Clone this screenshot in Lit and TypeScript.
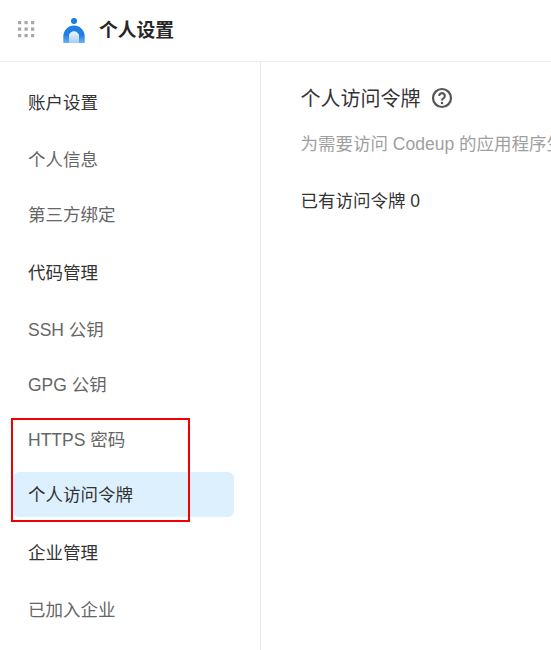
import { LitElement, html, css, svg } from "lit";
import { customElement } from "lit/decorators.js";

const FONT = css`"Liberation Sans", "Noto Sans CJK SC", sans-serif`;

type Item = { label: string; head?: boolean; active?: boolean };
const ITEMS: Item[] = [
  { label: "账户设置", head: true },
  { label: "个人信息" },
  { label: "第三方绑定" },
  { label: "代码管理", head: true },
  { label: "SSH 公钥" },
  { label: "GPG 公钥" },
  { label: "HTTPS 密码" },
  { label: "个人访问令牌", active: true },
  { label: "企业管理", head: true },
  { label: "已加入企业" },
];

@customElement("app-root")
export class AppRoot extends LitElement {
  static styles = css`
    :host {
      display: block;
      position: relative;
      width: 551px;
      height: 650px;
      overflow: hidden;
      background: #fff;
      font-family: ${FONT};
    }
    .top {
      height: 62px;
      box-sizing: border-box;
      border-bottom: 1px solid #ececec;
      display: flex;
      align-items: center;
      padding: 0 0 5px 17px;
    }
    .grid { display: block; width: 18px; height: 18px; margin-top: 2px; }
    .logo { display: block; width: 22px; height: 25px; margin: 4px 0 0 28px; }
    .title {
      margin-left: 14px;
      font-size: 18.75px;
      font-weight: 700;
      color: #262626;
    }
    .body { display: flex; height: 588px; }
    .side {
      width: 261px;
      box-sizing: border-box;
      border-right: 1px solid #e8e8e8;
      padding: 18px 26px 0 13px;
      display: flex;
      flex-direction: column;
    }
    .item {
      height: 45px;
      box-sizing: border-box;
      flex: none;
      display: flex;
      align-items: center;
      padding: 0 0 2px 15px;
      margin-bottom: 10px;
      border-radius: 6px;
      font-size: 17.5px;
      color: #666;
    }
    .item.head { color: #333; margin-bottom: 12px; }
    .item.pre { margin-bottom: 13px; }
    .item.active { background: #ddf0fe; color: #333; }
    .main { flex: 1; min-width: 0; padding: 20px 0 0 39.5px; overflow: hidden; }
    .h {
      display: flex;
      align-items: center;
      gap: 10px;
      height: 30px;
      font-size: 20px;
      color: #333;
    }
    .help { display: block; width: 22px; height: 22px; margin-top: 2px; }
    .desc {
      margin-top: 19px;
      height: 26px;
      line-height: 26px;
      font-size: 17.5px;
      color: #a0a0a0;
      white-space: nowrap;
    }
    .count {
      margin-top: 31px;
      height: 26px;
      line-height: 26px;
      font-size: 17.5px;
      color: #333;
    }
    .mark {
      position: absolute;
      left: 11px;
      top: 418px;
      width: 179px;
      height: 104px;
      box-sizing: border-box;
      border: 2px solid #f00000;
      pointer-events: none;
    }
  `;

  private grid() {
    const pts = [1, 7.5, 14];
    return html`<svg class="grid" viewBox="0 0 18 18">
      ${pts.flatMap((y) =>
        pts.map((x) => svg`<rect x=${x} y=${y} width="3.2" height="3.2" fill="#a6a6a6"></rect>`)
      )}
    </svg>`;
  }

  render() {
    return html`
      <div class="top">
        ${this.grid()}
        <svg class="logo" viewBox="0 0 22 25">
          <defs>
            <linearGradient id="lg" x1="0" y1="0" x2="0" y2="1">
              <stop offset="0" stop-color="#eef6fd"></stop>
              <stop offset="1" stop-color="#a4ccf5"></stop>
            </linearGradient>
            <linearGradient id="arch" x1="0" y1="0" x2="0" y2="1">
              <stop offset="0.55" stop-color="#1f7fe3"></stop>
              <stop offset="1" stop-color="#6fb0ef"></stop>
            </linearGradient>
          </defs>
          <circle cx="11" cy="3" r="3" fill="#1b7be0"></circle>
          <path d="M0.3 25V18.2a10.7 10.7 0 0 1 21.4 0V25H16V18.5a5 5 0 0 0-10 0V25z" fill="url(#arch)"></path>
          <path d="M6 25V18.5a5 5 0 0 1 10 0V25z" fill="url(#lg)"></path>
        </svg>
        <div class="title">个人设置</div>
      </div>
      <div class="body">
        <nav class="side">
          ${ITEMS.map(
            (i, n) =>
              html`<div class="item ${i.head ? "head" : ""} ${i.active ? "active" : ""} ${ITEMS[n + 1]?.head ? "pre" : ""}">${i.label}</div>`
          )}
        </nav>
        <main class="main">
          <div class="h">
            <span>个人访问令牌</span>
            <svg class="help" viewBox="0 0 22 22" fill="none">
              <circle cx="11" cy="11" r="9" stroke="#555" stroke-width="2.2"></circle>
              <path d="M8.2 8.9a2.8 2.8 0 1 1 4.3 2.4c-1 .6-1.5 1.1-1.5 2.1" stroke="#555" stroke-width="2.1"></path>
              <circle cx="11" cy="16" r="1.25" fill="#555"></circle>
            </svg>
          </div>
          <div class="desc">为需要访问 Codeup 的应用程序生成个人访问令牌</div>
          <div class="count">已有访问令牌 0</div>
        </main>
      </div>
      <div class="mark"></div>
    `;
  }
}
